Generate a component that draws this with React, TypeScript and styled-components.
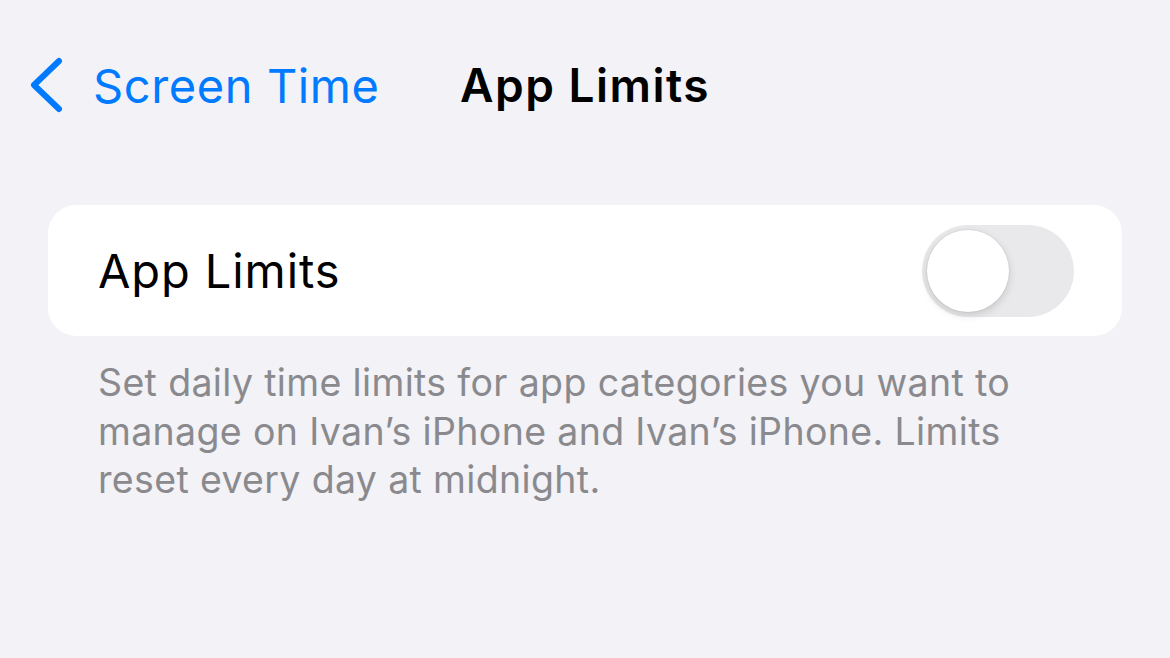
import React from 'react'
import styled, { createGlobalStyle } from 'styled-components'

const GlobalStyle = createGlobalStyle`
  html, body {
    margin: 0;
    padding: 0;
    background: #f2f2f7;
    font-family: Inter, "Noto Sans", "Liberation Sans", sans-serif;
    -webkit-font-smoothing: antialiased;
  }
`

const Page = styled.div`
  width: 1170px;
  height: 658px;
  background: #f2f2f7;
  display: flex;
  flex-direction: column;
  padding: 0 48px;
  box-sizing: border-box;
`

const NavBar = styled.div`
  display: flex;
  align-items: center;
  height: 66px;
  margin-top: 52px;
  margin-left: -20px;
`

const BackButton = styled.div`
  display: flex;
  align-items: center;
  color: #007aff;
  font-size: 47px;
  letter-spacing: 0.6px;
  gap: 29px;
  width: 432px;
`

const Title = styled.div`
  font-size: 46px;
  font-weight: 600;
  color: #000;
  letter-spacing: 1.5px;
`

const Card = styled.div`
  margin-top: 87px;
  background: #fff;
  border-radius: 28px;
  height: 131px;
  display: flex;
  align-items: center;
  justify-content: space-between;
  padding: 0 48px 0 50px;
`

const RowLabel = styled.div`
  font-size: 47px;
  color: #000;
  letter-spacing: 0.9px;
`

const Switch = styled.div<{ $on?: boolean }>`
  width: 152px;
  height: 92px;
  border-radius: 46px;
  background: ${(p) => (p.$on ? '#34c759' : '#e9e9eb')};
  position: relative;
`

const Knob = styled.div<{ $on?: boolean }>`
  position: absolute;
  top: 5px;
  left: ${(p) => (p.$on ? '65px' : '5px')};
  width: 82px;
  height: 82px;
  border-radius: 50%;
  background: #fff;
  box-shadow: 0 3px 8px rgba(0, 0, 0, 0.15), 0 0 0 1px rgba(0, 0, 0, 0.04);
`

const Footer = styled.p`
  margin: 23px 0 0 50px;
  font-size: 37.5px;
  line-height: 48.5px;
  letter-spacing: 0.35px;
  color: #8a8a8e;
  width: 960px;
`

const Chevron = () => (
  <svg width="36" height="56" viewBox="0 0 36 56" fill="none">
    <path d="M31 4 L6 28 L31 52" stroke="#007aff" strokeWidth="6" strokeLinecap="round" strokeLinejoin="round" />
  </svg>
)

export default function App() {
  return (
    <Page>
      <GlobalStyle />
      <NavBar>
        <BackButton>
          <Chevron />
          <span>Screen Time</span>
        </BackButton>
        <Title>App Limits</Title>
      </NavBar>
      <Card>
        <RowLabel>App Limits</RowLabel>
        <Switch>
          <Knob />
        </Switch>
      </Card>
      <Footer>
        Set daily time limits for app categories you want to
        <br />
        manage on Ivan’s iPhone and Ivan’s iPhone. Limits
        <br />
        reset every day at midnight.
      </Footer>
    </Page>
  )
}
